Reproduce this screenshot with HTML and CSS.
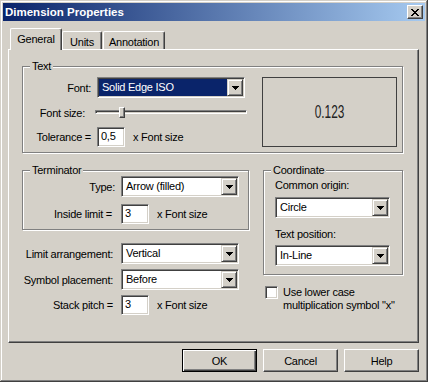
FILE: index.html
```html
<!DOCTYPE html>
<html lang="en">
<head>
  <meta charset="UTF-8">
  <meta name="viewport" content="width=device-width, initial-scale=1.0">
  <title>Dimension Properties</title>
  <link rel="stylesheet" href="styles.css">
</head>
<body>
  <div class="window">
    <div class="titlebar">
      <span class="title">Dimension Properties</span>
      <span class="close">
        <svg width="8" height="7" viewBox="0 0 8 7" shape-rendering="crispEdges"><path d="M0 0h2v1H0zM6 0h2v1H6zM1 1h2v1H1zM5 1h2v1H5zM2 2h4v1H2zM3 3h2v1H3zM2 4h4v1H2zM1 5h2v1H1zM5 5h2v1H5zM0 6h2v1H0zM6 6h2v1H6z" fill="#000"/></svg>
      </span>
    </div>

    <div class="client">
      <div class="tabs">
        <span class="tab active">General</span>
        <span class="tab units">Units</span>
        <span class="tab annotation">Annotation</span>
      </div>

      <div class="panel">
        <div class="group text-group">
          <span class="group-title">Text</span>
          <div class="form text-form">
            <span class="lbl">Font:</span>
            <div class="combo">
              <span class="value selected">Solid Edge ISO</span>
              <span class="drop"><svg width="7" height="4" viewBox="0 0 7 4" shape-rendering="crispEdges"><path d="M0 0h7v1H0zM1 1h5v1H1zM2 2h3v1H2zM3 3h1v1H3z" fill="#000"/></svg></span>
            </div>
            <span class="lbl lbl-slider">Font size:</span>
            <div class="slider">
              <div class="track"></div>
              <div class="thumb"></div>
            </div>
            <span class="lbl">Tolerance =</span>
            <div class="inline">
              <span class="field">0,5</span>
              <span class="unit">x Font size</span>
            </div>
          </div>
          <div class="preview"><span class="sample">0.123</span></div>
        </div>

        <div class="lower">
          <div class="lower-left">
            <div class="group terminator">
              <span class="group-title">Terminator</span>
              <div class="form term-form">
                <span class="lbl">Type:</span>
                <div class="combo">
                  <span class="value">Arrow (filled)</span>
                  <span class="drop"><svg width="7" height="4" viewBox="0 0 7 4" shape-rendering="crispEdges"><path d="M0 0h7v1H0zM1 1h5v1H1zM2 2h3v1H2zM3 3h1v1H3z" fill="#000"/></svg></span>
                </div>
                <span class="lbl lbl-limit">Inside limit =</span>
                <div class="inline">
                  <span class="field">3</span>
                  <span class="unit">x Font size</span>
                </div>
              </div>
            </div>

            <div class="form limit-form">
              <span class="lbl">Limit arrangement:</span>
              <div class="combo">
                <span class="value">Vertical</span>
                <span class="drop"><svg width="7" height="4" viewBox="0 0 7 4" shape-rendering="crispEdges"><path d="M0 0h7v1H0zM1 1h5v1H1zM2 2h3v1H2zM3 3h1v1H3z" fill="#000"/></svg></span>
              </div>
              <span class="lbl">Symbol placement:</span>
              <div class="combo">
                <span class="value">Before</span>
                <span class="drop"><svg width="7" height="4" viewBox="0 0 7 4" shape-rendering="crispEdges"><path d="M0 0h7v1H0zM1 1h5v1H1zM2 2h3v1H2zM3 3h1v1H3z" fill="#000"/></svg></span>
              </div>
              <span class="lbl">Stack pitch =</span>
              <div class="inline">
                <span class="field">3</span>
                <span class="unit">x Font size</span>
              </div>
            </div>
          </div>

          <div class="lower-right">
            <div class="group coordinate">
              <span class="group-title">Coordinate</span>
              <span class="top-lbl">Common origin:</span>
              <div class="combo wide">
                <span class="value">Circle</span>
                <span class="drop"><svg width="7" height="4" viewBox="0 0 7 4" shape-rendering="crispEdges"><path d="M0 0h7v1H0zM1 1h5v1H1zM2 2h3v1H2zM3 3h1v1H3z" fill="#000"/></svg></span>
              </div>
              <span class="top-lbl second">Text position:</span>
              <div class="combo wide">
                <span class="value">In-Line</span>
                <span class="drop"><svg width="7" height="4" viewBox="0 0 7 4" shape-rendering="crispEdges"><path d="M0 0h7v1H0zM1 1h5v1H1zM2 2h3v1H2zM3 3h1v1H3z" fill="#000"/></svg></span>
              </div>
            </div>

            <div class="check">
              <span class="box"></span>
              <span class="check-text">Use lower case<br>multiplication symbol "x"</span>
            </div>
          </div>
        </div>
      </div>

      <div class="buttons">
        <span class="btn default">OK</span>
        <span class="btn">Cancel</span>
        <span class="btn">Help</span>
      </div>
    </div>
  </div>
</body>
</html>
```

FILE: styles.css
```css
body {
  margin: 0;
  background: #d4d0c8;
  font-family: 'Liberation Sans', Arial, sans-serif;
  font-size: 11px;
  letter-spacing: -0.25px;
  color: #000;
}

.window {
  width: 428px;
  height: 382px;
  box-sizing: border-box;
  padding: 3px;
  background: #d4d0c8;
  box-shadow: inset -1px -1px #404040, inset 1px 1px #d4d0c8, inset -2px -2px #808080, inset 2px 2px #fff;
}

.titlebar {
  height: 18px;
  display: flex;
  align-items: center;
  justify-content: space-between;
  padding: 0 2px;
  background: linear-gradient(to right, #0a246a, #a6caf0);
}

.title {
  color: #fff;
  font-weight: bold;
  font-size: 11.5px;
  letter-spacing: 0;
}

.close {
  width: 16px;
  height: 14px;
  box-sizing: border-box;
  display: flex;
  align-items: center;
  justify-content: center;
  background: #d4d0c8;
  border: 1px solid;
  border-color: #fff #404040 #404040 #fff;
  box-shadow: inset -1px -1px #808080;
}

.client {
  padding: 7px 6px 0 5px;
}

/* tabs */
.tabs {
  display: flex;
  align-items: flex-end;
  position: relative;
  z-index: 1;
  margin-bottom: -1px;
  padding-left: 2px;
}

.tab {
  height: 18px;
  box-sizing: border-box;
  margin-bottom: 1px;
  display: flex;
  align-items: center;
  justify-content: center;
  padding-top: 2px;
  border: 1px solid;
  border-bottom: none;
  border-color: #fff #404040 #fff #fff;
  border-radius: 2px 2px 0 0;
  box-shadow: inset -1px 0 #808080;
  background: #d4d0c8;
}

.tab.active {
  width: 52px;
  height: 22px;
  margin-bottom: 0;
  padding-top: 0;
  padding-bottom: 2px;
}

.tab.units {
  width: 40px;
}

.tab.annotation {
  width: 62px;
  margin-left: 1px;
}

.panel {
  height: 294px;
  box-sizing: border-box;
  padding: 16px 15px 0 13px;
  border: 1px solid;
  border-color: #fff #404040 #404040 #fff;
  box-shadow: inset -1px -1px #808080;
}

/* group boxes */
.group {
  position: relative;
  border: 1px solid #808080;
  box-shadow: 1px 1px 0 #fff, inset 1px 1px 0 #fff;
}

.group-title {
  position: absolute;
  top: -7px;
  left: 7px;
  padding: 0 2px;
  line-height: 13px;
  background: #d4d0c8;
}

.form {
  display: grid;
  align-items: center;
}

.lbl {
  justify-self: end;
  white-space: nowrap;
}

.text-group {
  display: flex;
  justify-content: space-between;
  padding: 10px 5px 5px 0;
}

.text-form {
  grid-template-columns: 68px 148px;
  grid-template-rows: 21px 29px 20px;
  column-gap: 6px;
}

.lbl-slider {
  margin-right: 6px;
}

.slider {
  position: relative;
  height: 11px;
  margin: 0 -2px;
}

.track {
  margin-top: 3px;
  height: 4px;
  box-sizing: border-box;
  border: 1px solid;
  border-color: #808080 #fff #fff #808080;
  box-shadow: inset 1px 1px #404040;
}

.thumb {
  position: absolute;
  top: 0;
  left: 24px;
  width: 6px;
  height: 11px;
  box-sizing: border-box;
  background: #d4d0c8;
  border: 1px solid;
  border-color: #fff #404040 #404040 #fff;
  box-shadow: inset -1px -1px #808080;
}

.preview {
  width: 135px;
  height: 70px;
  box-sizing: border-box;
  border: 1px solid #404040;
  display: flex;
  align-items: center;
  justify-content: center;
}

.sample {
  display: inline-block;
  font-family: 'Liberation Sans', Arial, sans-serif;
  font-size: 18px;
  letter-spacing: 0;
  color: #222;
  transform: scaleX(0.66);
}

/* controls */
.combo {
  height: 21px;
  box-sizing: border-box;
  display: flex;
  padding: 1px;
  background: #fff;
  border: 1px solid;
  border-color: #808080 #fff #fff #808080;
  box-shadow: inset 1px 1px #404040, inset -1px -1px #d4d0c8;
}

.combo .value {
  flex: 1;
  padding-left: 3px;
  line-height: 17px;
  white-space: nowrap;
}

.combo .value.selected {
  background: #0a246a;
  color: #fff;
}

.drop {
  width: 16px;
  height: 17px;
  box-sizing: border-box;
  display: flex;
  align-items: center;
  justify-content: center;
  background: #d4d0c8;
  border: 1px solid;
  border-color: #d4d0c8 #404040 #404040 #d4d0c8;
  box-shadow: inset 1px 1px #fff, inset -1px -1px #808080;
}

.inline {
  display: flex;
  align-items: center;
}

.field {
  width: 28px;
  height: 20px;
  box-sizing: border-box;
  padding-left: 3px;
  line-height: 17px;
  background: #fff;
  border: 1px solid;
  border-color: #808080 #fff #fff #808080;
  box-shadow: inset 1px 1px #404040, inset -1px -1px #d4d0c8;
}

.unit {
  margin-left: 8px;
}

/* lower section */
.lower {
  display: flex;
  margin-top: 17px;
  gap: 14px;
}

.lower-left {
  width: 227px;
}

.lower-right {
  flex: 1;
}

.terminator {
  padding: 5px 0 5px 0;
}

.term-form {
  grid-template-columns: 92px 118px;
  grid-template-rows: 21px 20px;
  column-gap: 6px;
  row-gap: 7px;
}

.lbl-limit {
  margin-right: 3px;
}

.limit-form {
  margin-top: 13px;
  grid-template-columns: 91px 118px;
  grid-template-rows: 21px 21px 20px;
  column-gap: 8px;
  row-gap: 5px;
}

.coordinate {
  display: flex;
  flex-direction: column;
  padding: 8px 12px 8px 11px;
}

.top-lbl {
  line-height: 13px;
  margin-bottom: 5px;
}

.top-lbl.second {
  margin-top: 10px;
  margin-bottom: 4px;
}

.check {
  display: flex;
  align-items: flex-start;
  margin-top: 11px;
  padding-left: 2px;
}

.box {
  width: 13px;
  height: 13px;
  box-sizing: border-box;
  flex-shrink: 0;
  background: #fff;
  border: 1px solid;
  border-color: #808080 #fff #fff #808080;
  box-shadow: inset 1px 1px #404040, inset -1px -1px #d4d0c8;
}

.check-text {
  margin-left: 5px;
  line-height: 13px;
}

/* buttons */
.buttons {
  display: flex;
  justify-content: flex-end;
  gap: 6px;
  margin-top: 6px;
}

.btn {
  width: 75px;
  height: 23px;
  box-sizing: border-box;
  display: flex;
  align-items: center;
  justify-content: center;
  border: 1px solid;
  border-color: #fff #404040 #404040 #fff;
  box-shadow: inset -1px -1px #808080;
}

.btn.default {
  border-color: #000;
  box-shadow: inset 1px 1px #fff, inset -1px -1px #404040, inset -2px -2px #808080;
}
```
